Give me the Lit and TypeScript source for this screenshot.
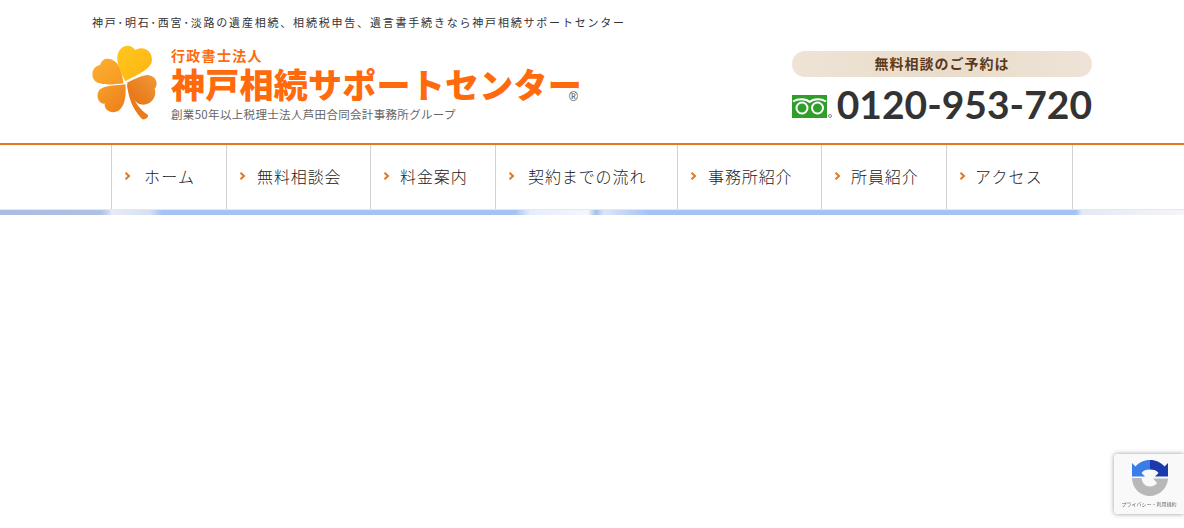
import { LitElement, html, css, svg } from "lit";
import { customElement } from "lit/decorators.js";

const NAV = [
  ["ホーム", "n1"],
  ["無料相談会", "n2"],
  ["料金案内", "n3"],
  ["契約までの流れ", "n4"],
  ["事務所紹介", "n5"],
  ["所員紹介", "n6"],
  ["アクセス", "n7"],
];

const clover = svg`
  <defs>
    <linearGradient id="g1" x1="0" y1="0" x2="1" y2="1"><stop offset="0" stop-color="#ffc71c"/><stop offset="1" stop-color="#fdb414"/></linearGradient>
    <linearGradient id="g2" x1="0" y1="0" x2="1" y2="1"><stop offset="0" stop-color="#fbb034"/><stop offset="1" stop-color="#f7981f"/></linearGradient>
    <linearGradient id="g3" x1="0" y1="0" x2="1" y2="1"><stop offset="0" stop-color="#f8a02c"/><stop offset="1" stop-color="#ec7d17"/></linearGradient>
    <linearGradient id="g4" x1="1" y1="0" x2="0" y2="1"><stop offset="0" stop-color="#f29a35"/><stop offset="1" stop-color="#e36f14"/></linearGradient>
  </defs>
  <path fill="url(#g1)" d="M119 124C108 100 92 75 96 48C100 20 130 6 150 31C168 18 200 28 199 62C198 85 165 100 119 124Z"/>
  <path fill="url(#g2)" d="M114 130C112 115 108 95 100 80C90 55 52 45 44 76C20 80 15 108 28 123C45 138 85 134 114 130Z"/>
  <path fill="url(#g3)" d="M120 133C90 137 60 135 42 150C28 170 42 195 58 191C55 212 80 224 100 212C120 195 122 165 120 133Z"/>
  <path fill="url(#g4)" d="M125 128C150 118 170 105 190 106C212 110 220 132 207 147C216 170 195 198 168 194C148 192 132 165 125 128Z"/>
  <path fill="#ea7a1a" d="M124 134C130 170 135 200 170 238C178 240 190 232 187 225C165 210 145 190 130 134Z"/>
`;

@customElement("app-root")
export class AppRoot extends LitElement {
  static styles = css`
    :host { display: block; background: #fff; min-height: 528px; font-family: "Noto Sans CJK JP", "Noto Sans", sans-serif; color: #333; }
    .top { margin: 0; padding: 15px 0 0 92px; height: 15px; font-size: 11px; line-height: 15px; letter-spacing: 1.8px; color: #333; white-space: nowrap; }
    .head { display: flex; height: 113px; padding-left: 92px; width: 1000px; justify-content: space-between; }
    .logo { display: flex; align-items: flex-start; }
    .clover { width: 67px; height: 78px; margin-top: 13px; flex: none; }
    .brand { margin-left: 12px; width: 420px; padding-top: 18px; position: relative; }
    .sub { font-size: 14px; line-height: 15px; font-weight: 700; color: #ff6a0d; letter-spacing: 1.3px; }
    .name { font-size: 34px; line-height: 30px; font-weight: 900; color: #ff6a0d; letter-spacing: 0.25px; margin-top: 6px; white-space: nowrap; }
    .reg { font-family: "Liberation Sans", sans-serif; font-size: 12px; line-height: 12px; color: #444; position: absolute; left: 398px; top: 61px; }
    .group { font-size: 11.5px; line-height: 14px; color: #666; letter-spacing: 0.33px; margin-top: 8px; white-space: nowrap; }
    .contact { width: 300px; padding-top: 21px; }
    .pill { height: 26px; border-radius: 13px; background: linear-gradient(90deg, #eee3d5, #e9dccb 50%, #eee3d6); color: #5b3a1c; font-size: 14px; font-weight: 700; line-height: 25px; text-align: center; letter-spacing: 1px; }
    .tel { display: flex; align-items: center; height: 40px; margin-top: 7px; justify-content: space-between; }
    .fd { width: 42px; height: 26px; flex: none; margin-top: 2px; }
    .num { font-family: "Lato", sans-serif; font-weight: 700; font-size: 39px; line-height: 40px; color: #333; white-space: nowrap; }
    nav { border-top: 2px solid #e2781e; height: 64px; padding-left: 111px; }
    ul { list-style: none; margin: 0; padding: 0; display: grid; grid-template-columns: 115px 144px 125px 182px 144px 125px 126px; width: 961px; height: 64px; border-right: 1px solid #d2d2d2; }
    li { border-left: 1px solid #d2d2d2; display: flex; align-items: center; padding: 0 0 2px 12px; font-size: 16px; font-weight: 300; letter-spacing: 0.9px; color: #222; white-space: nowrap; }
    .chev { width: 7px; height: 8px; margin-right: 12px; flex: none; }
    .n1 span { margin-left: 1px; letter-spacing: 1.3px; }
    .n2 span { margin-left: -1px; }
    .n3 span { margin-left: -2px; }
    .n4 span { margin-left: 1px; }
    .n5 span { margin-left: -1px; }
    .n6 span { margin-left: -2px; }
    .n7 span { margin-left: -3px; letter-spacing: 1.2px; }
    .strip { height: 5px; border-top: 1px solid #e4e8f0; background: linear-gradient(90deg, #a9bde4 0, #adc0e6 100px, #c4d2ec 107px, #e6ebf5 112px, #d6e0f3 150px, #a4c2f4 162px, #a4c2f4 515px, #e6edfb 530px, #f4f6fb 588px, #a4c0ee 596px, #dce6f8 604px, #a4c2f4 650px, #a4c2f4 1076px, #e3e8f3 1082px, #f5f6fa 1184px); }
    .badge { position: fixed; left: 1114px; top: 454px; width: 70px; height: 60px; background: #f9f9f9; border-radius: 3px 0 0 3px; box-shadow: 0 0 5px rgba(0,0,0,.4); overflow: hidden; }
    .badge svg { position: absolute; left: 17.500px; top: 6px; width: 36px; height: 36px; }
    .legal { position: absolute; left: 0; right: 0; top: 46px; text-align: center; font-size: 5px; line-height: 8px; color: #666; white-space: nowrap; }
  `;

  render() {
    return html`
      <p class="top">神戸･明石･西宮･淡路の遺産相続、相続税申告、遺言書手続きなら神戸相続サポートセンター</p>
      <header class="head">
        <div class="logo">
          <svg class="clover" viewBox="20 10 200 233">${clover}</svg>
          <div class="brand">
            <div class="sub">行政書士法人</div>
            <div class="name">神戸相続サポートセンター</div>
            <span class="reg">®</span>
            <div class="group">創業50年以上税理士法人芦田合同会計事務所グループ</div>
          </div>
        </div>
        <div class="contact">
          <div class="pill">無料相談のご予約は</div>
          <div class="tel">
            <svg class="fd" viewBox="0 0 42 26">
              <rect x="0" y="3" width="35" height="23" fill="#2f9e2b"/>
              <g fill="none" stroke="#fff" stroke-width="2">
                <circle cx="10" cy="16" r="5.500"/>
                <circle cx="25.500" cy="16" r="5.500"/>
                <path d="M1 9.500C6 6.500 14 6.500 17.700 10C21.500 6.500 29 6.500 34 9.500"/>
              </g>
              <circle cx="38" cy="24" r="1.500" fill="none" stroke="#555" stroke-width=".7"/>
            </svg>
            <span class="num">0120-953-720</span>
          </div>
        </div>
      </header>
      <nav>
        <ul>
          ${NAV.map(([label, cls]) => html`
            <li class=${cls}>
              <svg class="chev" viewBox="0 0 7 8"><path d="M1.500 .8L5 4L1.500 7.200" fill="none" stroke="#e2781e" stroke-width="2"/></svg>
              <span>${label}</span>
            </li>`)}
        </ul>
      </nav>
      <div class="strip"></div>
      <aside class="badge">
        <svg viewBox="0 0 36 36">
          <path fill="#b8b8b8" d="M0 18H9.500C10 23 13.500 26.500 18 26.500C21 26.500 23.500 25 25 23L21 18.500H36C35.500 28 27.500 36 18 36C8 36 0 28 0 18Z"/>
          <path fill="#3b7de8" d="M18 0C12 0 7 2.500 3.500 6.500L0 3V16.500H13L9.500 13C11 10.500 14 9.500 18 9.500Z"/>
          <path fill="#1c3aa9" d="M18 0C24 0 29 2.500 32.500 6.500L36 3V16.500H23L26.500 13C25 10.500 22 9.500 18 9.500Z"/>
        </svg>
        <div class="legal">プライバシー・利用規約</div>
      </aside>
    `;
  }
}
